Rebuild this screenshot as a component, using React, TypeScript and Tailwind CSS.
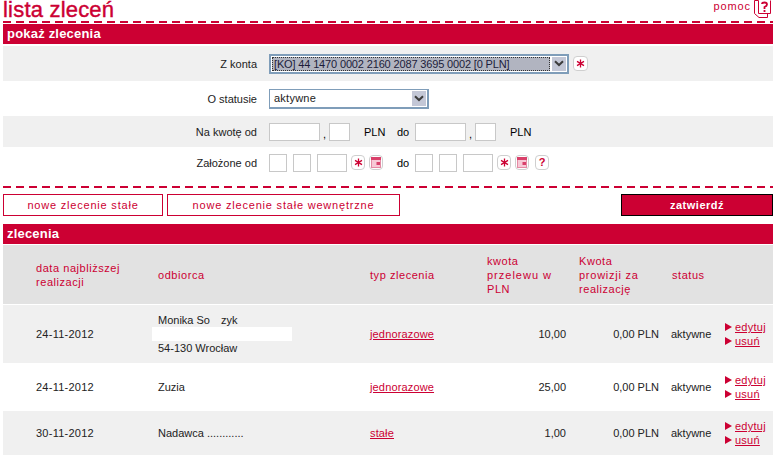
const RED = "#cc0033";

function Chevron() {
  return (
    <svg width="10" height="7" viewBox="0 0 10 7">
      <path d="M1 1.2 L5 5 L9 1.2" fill="none" stroke="#3c3c3c" strokeWidth="2" />
    </svg>
  );
}

function SelectBox({ wide, children }: { wide: boolean; children: React.ReactNode }) {
  return (
    <div className={`flex h-5 items-stretch border border-[#7f9db9] bg-white ${wide ? "w-[300px] border-2" : "w-40 border-2 border-l-1 border-t-1"}`}>
      <div className="flex min-w-0 flex-1 items-center overflow-hidden whitespace-nowrap">{children}</div>
      <div className="flex w-4 items-center justify-center border border-white bg-[#c3c7d6]">
        <Chevron />
      </div>
    </div>
  );
}

function IconBox({ children, className = "w-[14px]" }: { children: React.ReactNode; className?: string }) {
  return (
    <div className={`flex h-[15px] shrink-0 items-center justify-center rounded-[4px] border border-[#cfcfcf] bg-white ${className}`}>
      {children}
    </div>
  );
}

function Star({ className }: { className?: string }) {
  return (
    <IconBox className={className}>
      <svg width="9" height="9" viewBox="0 0 9 9">
        <path d="M4.5 0.5 V8.5 M1 2.4 L8 6.6 M8 2.4 L1 6.6" stroke={RED} strokeWidth="1.3" />
      </svg>
    </IconBox>
  );
}

function Cal() {
  return (
    <IconBox>
      <svg width="10" height="11" viewBox="0 0 10 11">
        <rect x="0.5" y="0.5" width="9" height="10" fill="#f7c9d6" stroke="#e58aa4" />
        <rect x="0" y="0" width="10" height="3" fill="#d9406a" />
        <rect x="5.5" y="5" width="3.5" height="3" fill="#d9406a" />
      </svg>
    </IconBox>
  );
}

function Field({ w }: { w: string }) {
  return <div className={`h-[18px] shrink-0 border border-[#c8c8c8] bg-white ${w}`} />;
}

function FormRow({ label, gray, h, children }: { label: string; gray?: boolean; h: string; children: React.ReactNode }) {
  return (
    <div className={`flex items-center tracking-normal ${h} ${gray ? "bg-[#f0f0f0]" : "bg-white"}`}>
      <div className="w-[254px] pr-0 text-right text-[#222]">{label}</div>
      <div className="ml-3 flex items-center">{children}</div>
    </div>
  );
}

function Section({ title }: { title: string }) {
  return <div className="h-5 bg-[#cc0033] pl-1 text-[13px] leading-5 font-bold tracking-[0.2px] text-white">{title}</div>;
}

function Dashed() {
  return <div className="h-0.5 bg-[repeating-linear-gradient(90deg,#cc0033_0,#cc0033_8px,transparent_8px,transparent_13px)]" />;
}

function Arrow() {
  return (
    <svg width="7" height="8" viewBox="0 0 7 8" className="mr-[3px] shrink-0">
      <path d="M0 0 L7 4 L0 8 Z" fill={RED} />
    </svg>
  );
}

function Actions() {
  return (
    <div className="flex flex-col gap-[2px] pl-px leading-[12px]">
      <div className="flex items-center"><Arrow /><a className="text-[#cc0033] underline">edytuj</a></div>
      <div className="flex items-center"><Arrow /><a className="text-[#cc0033] underline">usuń</a></div>
    </div>
  );
}

const cols = "grid grid-cols-[155px_212px_117px_92px_93px_52px_49px]";

function Row({ date, who, type, amt, gray, h }: { date: string; who: React.ReactNode; type: string; amt: string; gray?: boolean; h: string }) {
  return (
    <div className={`${cols} items-center text-[#222] ${h} ${gray ? "bg-[#f0f0f0]" : "bg-white"}`}>
      <div className="pl-[33px]">{date}</div>
      <div className="tracking-normal">{who}</div>
      <div className="tracking-[0.15px]"><a className="text-[#cc0033] underline">{type}</a></div>
      <div className="pr-[13px] text-right tracking-normal">{amt}</div>
      <div className="pr-[13px] text-right tracking-normal">0,00 PLN</div>
      <div className="-ml-px tracking-normal">aktywne</div>
      <Actions />
    </div>
  );
}

export default function App() {
  return (
    <div className="h-[455px] w-[774px] overflow-hidden bg-white pl-[3px] pr-[1px] font-['Liberation_Sans',Arial,sans-serif] text-[11px] leading-[14px] tracking-[0.25px]">
      <div className="flex h-[21px] items-start justify-between">
        <div className="text-[22px] leading-5 tracking-[0.2px] text-[#cc0033] [-webkit-text-stroke:0.4px_#cc0033]">lista zleceń</div>
        <div className="flex items-start">
          <span className="mt-[-1px] tracking-[0.9px] text-[#cc0033]">pomoc</span>
          <svg width="18" height="19" viewBox="0 0 18 19" className="mr-[1px] ml-[3px]" fill="none" stroke={RED}>
            <path d="M4.5 0.5 H0.5 V13.5 L5 17.5 H13.5 V14" />
            <path d="M4.5 0.5 V13.5 H16.5 V0.5" />
            <path d="M8 4 Q8 2.5 10.5 2.5 Q13 2.5 13 4.5 Q13 6 10.5 7 V9 M10.5 10 V12" strokeWidth="1.8" />
          </svg>
        </div>
      </div>
      <Dashed />
      <div className="mt-px"><Section title="pokaż zlecenia" /></div>
      <div className="mt-[2px]">
        <FormRow label="Z konta" gray h="h-[35px]">
          <SelectBox wide>
            <div className="m-[1px] flex h-[14px] flex-1 items-center border border-dotted border-[#333] bg-[#b1b4c0] pl-px tracking-[-0.15px] text-[#1c1c3a]">
              [KO] 44 1470 0002 2160 2087 3695 0002 [0 PLN]
            </div>
          </SelectBox>
          <div className="ml-1"><Star className="w-[15px]" /></div>
        </FormRow>
        <FormRow label="O statusie" h="h-[35px]">
          <SelectBox wide={false}>
            <span className="pl-1 tracking-[0.25px] text-[#222]">aktywne</span>
          </SelectBox>
        </FormRow>
        <FormRow label="Na kwotę od" gray h="h-[31px]">
          <Field w="w-[51px]" />
          <span className="w-[9px] pt-1 text-center">,</span>
          <Field w="w-[21px]" />
          <span className="ml-[14px] w-[33px]">PLN</span>
          <span className="w-[18px]">do</span>
          <Field w="w-[51px]" />
          <span className="w-[9px] pt-1 text-center">,</span>
          <Field w="w-[21px]" />
          <span className="ml-[14px]">PLN</span>
        </FormRow>
        <FormRow label="Założone od" h="h-[31px]">
          <Field w="w-[18px]" />
          <div className="w-[6px]" />
          <Field w="w-[18px]" />
          <div className="w-[6px]" />
          <Field w="w-[30px]" />
          <div className="ml-1"><Star /></div>
          <div className="ml-1"><Cal /></div>
          <span className="ml-[14px] w-[18px]">do</span>
          <Field w="w-[18px]" />
          <div className="w-[6px]" />
          <Field w="w-[18px]" />
          <div className="w-[6px]" />
          <Field w="w-[30px]" />
          <div className="ml-1"><Star /></div>
          <div className="ml-1"><Cal /></div>
          <IconBox className="ml-[6px] w-[14px]">
            <span className="text-[11px] leading-none font-bold text-[#cc0033]">?</span>
          </IconBox>
        </FormRow>
      </div>
      <div className="mt-2"><Dashed /></div>
      <div className="mt-[6px] flex h-[22px] items-stretch gap-1 tracking-[0.8px]">
        <div className="flex w-40 items-center justify-center border border-[#cc0033] text-[#cc0033]">nowe zlecenie stałe</div>
        <div className="flex w-[233px] items-center justify-center border border-[#cc0033] text-[#cc0033]">nowe zlecenie stałe wewnętrzne</div>
        <div className="ml-auto flex w-[152px] items-center justify-center border border-black bg-[#cc0033] font-bold tracking-[0.5px] text-white">zatwierdź</div>
      </div>
      <div className="mt-2"><Section title="zlecenia" /></div>
      <div className={`${cols} mt-px h-[59px] items-center bg-[#e2e2e2] tracking-[0.55px] text-[#cc0033]`}>
        <div className="pl-[33px]">data najbliższej<br />realizacji</div>
        <div>odbiorca</div>
        <div>typ zlecenia</div>
        <div>kwota<br /><span className="tracking-[1px]">przelewu w</span><br />PLN</div>
        <div>Kwota<br /><span className="tracking-[0.75px]">prowizji za</span><br />realizację</div>
        <div>status</div>
        <div />
      </div>
      <div className="mt-px">
        <Row
          gray
          h="h-[58px]"
          date="24-11-2012"
          type="jednorazowe"
          amt="10,00"
          who={
            <div className="flex flex-col">
              <span>Monika So<span className="inline-block w-[11px]" />zyk</span>
              <span className="h-[14px] -ml-[6px] w-[140px] bg-white" />
              <span>54-130 Wrocław</span>
            </div>
          }
        />
        <Row h="h-[48px]" date="24-11-2012" who="Zuzia" type="jednorazowe" amt="25,00" />
        <Row gray h="h-[44px]" date="30-11-2012" who="Nadawca ............" type="stałe" amt="1,00" />
      </div>
    </div>
  );
}
